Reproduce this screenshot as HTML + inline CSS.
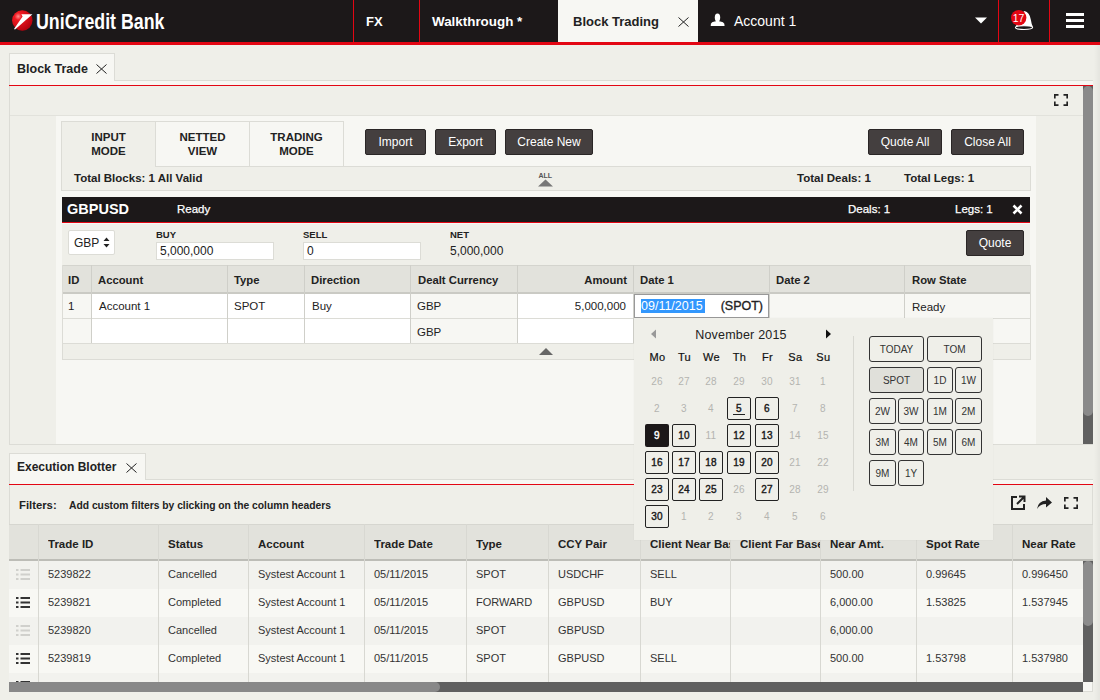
<!DOCTYPE html>
<html><head><meta charset="utf-8">
<style>
*{margin:0;padding:0;box-sizing:border-box}
html,body{width:1100px;height:700px;overflow:hidden}
body{position:relative;background:#efefe9;font-family:"Liberation Sans",sans-serif;color:#222}
.a{position:absolute}
.t{position:absolute;white-space:nowrap;line-height:1}
.b{font-weight:bold}
.vr{position:absolute;width:1px;background:#e30613}
.btn{position:absolute;height:26px;background:#443f3f;border:1px solid #2a2626;border-radius:2px;color:#fff;font-size:12px;text-align:center;line-height:24px}
.qb{position:absolute;height:26px;border:1px solid #333;border-radius:3px;font-size:10px;color:#333;text-align:center;line-height:26px}
</style></head><body>
<div class="a" style="left:0px;top:0px;width:1100px;height:42px;background:#1c1819"></div>
<div class="a" style="left:0px;top:42px;width:1100px;height:3px;background:#e30613"></div>
<svg class="a" style="left:0;top:0" width="40" height="42" viewBox="0 0 40 42">
 <defs><radialGradient id="rg" cx="0.3" cy="0.3" r="0.8"><stop offset="0" stop-color="#ff9090"/><stop offset="0.22" stop-color="#f01a22"/><stop offset="1" stop-color="#b0000c"/></radialGradient></defs>
 <circle cx="22.3" cy="20.5" r="10.2" fill="url(#rg)"/>
 <polygon points="14,29 22.6,16.6 21.3,14.2 32.5,14.2 15,29.5" fill="#fff"/>
</svg>
<div class="t b" style="left:35.5px;top:10px;font-size:22.8px;color:#fff;transform-origin:0 0;transform:scaleX(0.78)">UniCredit Bank</div>
<div class="vr" style="left:353px;top:0;height:42px"></div>
<div class="vr" style="left:419px;top:0;height:42px"></div>
<div class="vr" style="left:998px;top:0;height:42px"></div>
<div class="vr" style="left:1049px;top:0;height:42px"></div>
<div class="t b" style="left:366px;top:15px;font-size:13px;color:#fff">FX</div>
<div class="t b" style="left:432px;top:15px;font-size:13.4px;color:#fff">Walkthrough *</div>
<div class="a" style="left:558px;top:0px;width:140px;height:42px;background:#f7f7f3"></div>
<div class="t b" style="left:573px;top:15px;font-size:13px;color:#222">Block Trading</div>
<svg class="a" style="left:678px;top:17px" width="11" height="10" viewBox="0 0 11 10"><path d="M0.5 0.5L10.5 9.5M10.5 0.5L0.5 9.5" stroke="#222" stroke-width="1"/></svg>
<svg class="a" style="left:705px;top:8px" width="30" height="24" viewBox="0 0 30 24"><ellipse cx="12.5" cy="9.4" rx="2.7" ry="3.8" fill="#fff"/><rect x="10.6" y="9" width="3.8" height="5" fill="#fff"/><path d="M5.7 18 L5.9 15.8 Q6.5 14.2 9.5 13.6 L15.5 13.6 Q18.5 14.2 19.3 15.8 L19.6 18 Z" fill="#fff"/></svg>
<div class="t" style="left:734px;top:14px;font-size:14px;color:#fff">Account 1</div>
<svg class="a" style="left:975px;top:17px" width="12" height="7" viewBox="0 0 12 7"><path d="M0 0.5H12L6 6.5Z" fill="#fff"/></svg>
<svg class="a" style="left:1005px;top:5px" width="30" height="28" viewBox="0 0 30 28">
 <path d="M11 22 Q13 9 19.5 6 Q24.5 7 25.8 14.5 Q26.5 19.5 28.2 22.5 Z" fill="#fff"/>
 <ellipse cx="19" cy="22.6" rx="8.6" ry="1.9" fill="#1c1819" stroke="#fff" stroke-width="1.1"/>
 <circle cx="13.7" cy="12.7" r="7.7" fill="#e30613"/>
</svg>
<div class="t" style="left:1008px;width:21px;text-align:center;top:12.5px;font-size:10.5px;color:#fff">17</div>
<div class="a" style="left:1066px;top:13px;width:18px;height:3px;background:#fff"></div>
<div class="a" style="left:1066px;top:19px;width:18px;height:3px;background:#fff"></div>
<div class="a" style="left:1066px;top:25px;width:18px;height:3px;background:#fff"></div>
<div class="a" style="left:9px;top:53px;width:106px;height:28px;background:#f7f7f3;border:1px solid #dcdcd6;border-bottom:none"></div>
<div class="t b" style="left:17px;top:63px;font-size:12.5px;color:#222">Block Trade</div>
<svg class="a" style="left:95.5px;top:63.5px" width="11" height="10" viewBox="0 0 11 10"><path d="M0.5 0.5L10.5 9.5M10.5 0.5L0.5 9.5" stroke="#222" stroke-width="1"/></svg>
<div class="a" style="left:115px;top:80px;width:978px;height:1px;background:#dcdcd6"></div>
<div class="a" style="left:10px;top:81px;width:1083px;height:4px;background:#f7f7f3"></div>
<div class="a" style="left:9px;top:81px;width:1px;height:4px;background:#dcdcd6"></div>
<div class="a" style="left:9px;top:85px;width:1084px;height:1px;background:#e30613"></div>
<div class="a" style="left:9px;top:86px;width:1px;height:358px;background:#dcdcd6"></div>
<div class="a" style="left:9px;top:444px;width:1084px;height:1px;background:#dcdcd6"></div>
<svg class="a" style="left:1054px;top:94px" width="14" height="12" viewBox="0 0 14 12"><path d="M0.8 4.5V0.8H4.5M9.5 0.8H13.2V4.5M13.2 7.5V11.2H9.5M4.5 11.2H0.8V7.5" fill="none" stroke="#222" stroke-width="1.7"/></svg>
<div class="a" style="left:10px;top:115px;width:1073px;height:1px;background:#e2e2dc"></div>
<div class="a" style="left:56px;top:116px;width:980px;height:328px;background:#f7f7f3"></div>
<div class="a" style="left:1083px;top:86px;width:10px;height:358px;background:#606060"></div>
<div class="a" style="left:1083px;top:86px;width:10px;height:330px;background:#8a8a8a;border-radius:5px"></div>
<div class="a" style="left:61px;top:121px;width:283px;height:45px;border:1px solid #dcdcd6;border-bottom:none;background:#f7f7f3"></div>
<div class="a" style="left:61px;top:166px;width:970px;height:25px;background:#efefe9;border:1px solid #dcdcd6"></div>
<div class="a" style="left:62px;top:122px;width:93px;height:45px;background:#efefe9"></div>
<div class="a" style="left:155px;top:121px;width:1px;height:45px;background:#dcdcd6"></div>
<div class="a" style="left:249px;top:121px;width:1px;height:45px;background:#dcdcd6"></div>
<div class="t b" style="left:62px;width:93px;top:130px;font-size:11.5px;line-height:14px;text-align:center;color:#222">INPUT<br>MODE</div>
<div class="t b" style="left:156px;width:93px;top:130px;font-size:11.5px;line-height:14px;text-align:center;color:#222">NETTED<br>VIEW</div>
<div class="t b" style="left:250px;width:93px;top:130px;font-size:11.5px;line-height:14px;text-align:center;color:#222">TRADING<br>MODE</div>
<div class="btn" style="left:365px;top:129px;width:61px">Import</div>
<div class="btn" style="left:435px;top:129px;width:61px">Export</div>
<div class="btn" style="left:505px;top:129px;width:88px">Create New</div>
<div class="btn" style="left:868px;top:129px;width:74px">Quote All</div>
<div class="btn" style="left:951px;top:129px;width:73px">Close All</div>
<div class="t b" style="left:74px;top:173px;font-size:11.5px;color:#222">Total Blocks: 1 All Valid</div>
<div class="t b" style="left:538.5px;top:172px;font-size:7px;color:#555">ALL</div>
<svg class="a" style="left:538px;top:179px" width="15" height="8" viewBox="0 0 15 8"><path d="M0 7.5L7.5 0.5L15 7.5Z" fill="#777"/></svg>
<div class="t b" style="left:797px;top:173px;font-size:11.5px;color:#222">Total Deals: 1</div>
<div class="t b" style="left:904px;top:173px;font-size:11.5px;color:#222">Total Legs: 1</div>
<div class="a" style="left:62px;top:197px;width:968px;height:25px;background:#1c1819"></div>
<div class="a" style="left:62px;top:222px;width:968px;height:1px;background:#e30613"></div>
<div class="a" style="left:62px;top:223px;width:968px;height:1px;background:#f7f7f3"></div>
<div class="t b" style="left:67px;top:202px;font-size:14.5px;color:#fff">GBPUSD</div>
<div class="t" style="left:177px;top:203.5px;font-size:11.5px;color:#fff;-webkit-text-stroke:0.25px #fff">Ready</div>
<div class="t" style="left:848px;top:203.5px;font-size:11.5px;color:#fff;-webkit-text-stroke:0.25px #fff">Deals: 1</div>
<div class="t" style="left:955px;top:203.5px;font-size:11.5px;color:#fff;-webkit-text-stroke:0.25px #fff">Legs: 1</div>
<svg class="a" style="left:1012px;top:204px" width="11" height="11" viewBox="0 0 11 11"><path d="M1.5 1.5L9.5 9.5M9.5 1.5L1.5 9.5" stroke="#fff" stroke-width="2.6"/></svg>
<div class="a" style="left:62px;top:224px;width:968px;height:41px;background:#efefe9"></div>
<div class="a" style="left:68px;top:230px;width:47px;height:25px;background:#fff;border:1px solid #dcdcd6;border-radius:2px"></div>
<div class="t" style="left:74px;top:237px;font-size:12px;color:#222">GBP</div>
<svg class="a" style="left:103px;top:237px" width="7" height="11" viewBox="0 0 7 11"><path d="M0.5 4L3.5 0.5L6.5 4ZM0.5 7L3.5 10.5L6.5 7Z" fill="#222"/></svg>
<div class="t b" style="left:156px;top:230px;font-size:9.5px;color:#222">BUY</div>
<div class="a" style="left:156px;top:242px;width:118px;height:18px;background:#fff;border:1px solid #dcdcd6"></div>
<div class="t" style="left:160px;top:245px;font-size:12px;color:#222">5,000,000</div>
<div class="t b" style="left:303px;top:230px;font-size:9.5px;color:#222">SELL</div>
<div class="a" style="left:303px;top:242px;width:118px;height:18px;background:#fff;border:1px solid #dcdcd6"></div>
<div class="t" style="left:307px;top:245px;font-size:12px;color:#222">0</div>
<div class="t b" style="left:450px;top:230px;font-size:9.5px;color:#222">NET</div>
<div class="t" style="left:450px;top:245px;font-size:12px;color:#222">5,000,000</div>
<div class="btn" style="left:966px;top:230px;width:58px">Quote</div>
<div class="a" style="left:62px;top:265px;width:968px;height:29px;background:#e2e2dc;border-top:1px solid #d4d4ce;border-bottom:2px solid #cacac4"></div>
<div class="a" style="left:62px;top:294px;width:968px;height:49px;background:#f7f7f3"></div>
<div class="a" style="left:91px;top:294px;width:136px;height:49px;background:#fff"></div>
<div class="a" style="left:227px;top:294px;width:77px;height:49px;background:#fff"></div>
<div class="a" style="left:304px;top:294px;width:106px;height:49px;background:#fff"></div>
<div class="a" style="left:517px;top:294px;width:116px;height:49px;background:#fff"></div>
<div class="a" style="left:633px;top:294px;width:136px;height:49px;background:#fff"></div>
<div class="a" style="left:62px;top:318px;width:968px;height:1px;background:#dcdcd6"></div>
<div class="a" style="left:62px;top:343px;width:968px;height:17px;background:#efefe9;border-top:1px solid #dcdcd6;border-bottom:1px solid #dcdcd6"></div>
<div class="a" style="left:62px;top:265px;width:1px;height:95px;background:#dcdcd6"></div>
<div class="a" style="left:1030px;top:265px;width:1px;height:95px;background:#dcdcd6"></div>
<div class="a" style="left:91px;top:265px;width:1px;height:78px;background:#cfcfc9"></div>
<div class="a" style="left:227px;top:265px;width:1px;height:78px;background:#cfcfc9"></div>
<div class="a" style="left:304px;top:265px;width:1px;height:78px;background:#cfcfc9"></div>
<div class="a" style="left:410px;top:265px;width:1px;height:78px;background:#cfcfc9"></div>
<div class="a" style="left:517px;top:265px;width:1px;height:78px;background:#cfcfc9"></div>
<div class="a" style="left:633px;top:265px;width:1px;height:78px;background:#cfcfc9"></div>
<div class="a" style="left:769px;top:265px;width:1px;height:78px;background:#cfcfc9"></div>
<div class="a" style="left:904px;top:265px;width:1px;height:78px;background:#cfcfc9"></div>
<div class="t b" style="left:68px;top:274.5px;font-size:11.3px;">ID</div>
<div class="t b" style="left:98px;top:274.5px;font-size:11.3px;">Account</div>
<div class="t b" style="left:234px;top:274.5px;font-size:11.3px;">Type</div>
<div class="t b" style="left:311px;top:274.5px;font-size:11.3px;">Direction</div>
<div class="t b" style="left:418px;top:274.5px;font-size:11.3px;">Dealt Currency</div>
<div class="t b" style="left:640px;top:274.5px;font-size:11.3px;">Date 1</div>
<div class="t b" style="left:776px;top:274.5px;font-size:11.3px;">Date 2</div>
<div class="t b" style="left:912px;top:274.5px;font-size:11.3px;">Row State</div>
<div class="t b" style="left:517px;width:110px;text-align:right;top:274.5px;font-size:11.3px">Amount</div>
<div class="t" style="left:68px;top:301px;font-size:11.5px;">1</div>
<div class="t" style="left:99px;top:301px;font-size:11.5px;">Account 1</div>
<div class="t" style="left:234px;top:301px;font-size:11.5px;">SPOT</div>
<div class="t" style="left:312px;top:301px;font-size:11.5px;">Buy</div>
<div class="t" style="left:417px;top:301px;font-size:11.5px;">GBP</div>
<div class="t" style="left:517px;width:109px;text-align:right;top:301px;font-size:11.5px">5,000,000</div>
<div class="t" style="left:912px;top:302px;font-size:11.5px;">Ready</div>
<div class="t" style="left:417px;top:327px;font-size:11.5px;">GBP</div>
<svg class="a" style="left:539px;top:348px" width="14" height="7" viewBox="0 0 14 7"><path d="M0 7L7 0L14 7Z" fill="#666"/></svg>
<div class="a" style="left:9px;top:453px;width:137px;height:27px;background:#f7f7f3;border:1px solid #dcdcd6;border-bottom:none"></div>
<div class="t b" style="left:17px;top:461px;font-size:12px;color:#222">Execution Blotter</div>
<svg class="a" style="left:125.5px;top:463px" width="11" height="10" viewBox="0 0 11 10"><path d="M0.5 0.5L10.5 9.5M10.5 0.5L0.5 9.5" stroke="#222" stroke-width="1"/></svg>
<div class="a" style="left:146px;top:479px;width:947px;height:1px;background:#dcdcd6"></div>
<div class="a" style="left:10px;top:480px;width:1083px;height:4px;background:#f7f7f3"></div>
<div class="a" style="left:9px;top:480px;width:1px;height:4px;background:#dcdcd6"></div>
<div class="a" style="left:9px;top:484px;width:1084px;height:1px;background:#e30613"></div>
<div class="a" style="left:9px;top:485px;width:1px;height:207px;background:#dcdcd6"></div>
<div class="a" style="left:1092px;top:485px;width:1px;height:207px;background:#dcdcd6"></div>
<div class="t b" style="left:19px;top:499.5px;font-size:11.3px;color:#222">Filters:</div>
<div class="t b" style="left:69px;top:500.5px;font-size:10.3px;color:#222">Add custom filters by clicking on the column headers</div>
<svg class="a" style="left:1010px;top:495px" width="16" height="16" viewBox="0 0 16 16"><path d="M7 2H2V14H14V9" fill="none" stroke="#222" stroke-width="2"/><path d="M9 1.5H14.5V7M14 2L7 9" fill="none" stroke="#222" stroke-width="2"/></svg>
<svg class="a" style="left:1036px;top:495px" width="17" height="15" viewBox="0 0 17 15"><path d="M1 14 Q2 6 10 5.5V2L16 7.5L10 12.5V9 Q4 9 1 14Z" fill="#222"/></svg>
<svg class="a" style="left:1064px;top:497px" width="14" height="12" viewBox="0 0 14 12"><path d="M0.8 4.5V0.8H4.5M9.5 0.8H13.2V4.5M13.2 7.5V11.2H9.5M4.5 11.2H0.8V7.5" fill="none" stroke="#222" stroke-width="1.8"/></svg>
<div class="a" style="left:9px;top:524px;width:1084px;height:37px;background:#e2e2dc;border-top:1px solid #d6d6d0;border-bottom:2px solid #bdbdb7"></div>
<div class="a" style="left:9px;top:561px;width:1074px;height:28px;background:#f2f2ee"></div>
<div class="a" style="left:9px;top:589px;width:1074px;height:28px;background:#f8f8f4"></div>
<div class="a" style="left:9px;top:617px;width:1074px;height:28px;background:#f2f2ee"></div>
<div class="a" style="left:9px;top:645px;width:1074px;height:28px;background:#f8f8f4"></div>
<div class="a" style="left:9px;top:673px;width:1074px;height:9px;background:#f2f2ee"></div>
<div class="a" style="left:38px;top:524px;width:1px;height:158px;background:#d8d8d2"></div>
<div class="a" style="left:158px;top:524px;width:1px;height:158px;background:#d8d8d2"></div>
<div class="a" style="left:248px;top:524px;width:1px;height:158px;background:#d8d8d2"></div>
<div class="a" style="left:364px;top:524px;width:1px;height:158px;background:#d8d8d2"></div>
<div class="a" style="left:466px;top:524px;width:1px;height:158px;background:#d8d8d2"></div>
<div class="a" style="left:548px;top:524px;width:1px;height:158px;background:#d8d8d2"></div>
<div class="a" style="left:640px;top:524px;width:1px;height:158px;background:#d8d8d2"></div>
<div class="a" style="left:730px;top:524px;width:1px;height:158px;background:#d8d8d2"></div>
<div class="a" style="left:820px;top:524px;width:1px;height:158px;background:#d8d8d2"></div>
<div class="a" style="left:916px;top:524px;width:1px;height:158px;background:#d8d8d2"></div>
<div class="a" style="left:1012px;top:524px;width:1px;height:158px;background:#d8d8d2"></div>
<div class="t b" style="left:48px;top:539px;width:110px;overflow:hidden;font-size:11.5px;color:#222">Trade ID</div>
<div class="t b" style="left:168px;top:539px;width:80px;overflow:hidden;font-size:11.5px;color:#222">Status</div>
<div class="t b" style="left:258px;top:539px;width:106px;overflow:hidden;font-size:11.5px;color:#222">Account</div>
<div class="t b" style="left:374px;top:539px;width:92px;overflow:hidden;font-size:11.5px;color:#222">Trade Date</div>
<div class="t b" style="left:476px;top:539px;width:72px;overflow:hidden;font-size:11.5px;color:#222">Type</div>
<div class="t b" style="left:558px;top:539px;width:82px;overflow:hidden;font-size:11.5px;color:#222">CCY Pair</div>
<div class="t b" style="left:650px;top:539px;width:80px;overflow:hidden;font-size:11.5px;color:#222">Client Near Base</div>
<div class="t b" style="left:740px;top:539px;width:80px;overflow:hidden;font-size:11.5px;color:#222">Client Far Base</div>
<div class="t b" style="left:830px;top:539px;width:86px;overflow:hidden;font-size:11.5px;color:#222">Near Amt.</div>
<div class="t b" style="left:926px;top:539px;width:86px;overflow:hidden;font-size:11.5px;color:#222">Spot Rate</div>
<div class="t b" style="left:1022px;top:539px;width:71px;overflow:hidden;font-size:11.5px;color:#222">Near Rate</div>
<div class="t" style="left:48px;top:569px;font-size:11px;color:#333">5239822</div>
<div class="t" style="left:168px;top:569px;font-size:11px;color:#333">Cancelled</div>
<div class="t" style="left:258px;top:569px;font-size:11px;color:#333">Systest Account 1</div>
<div class="t" style="left:374px;top:569px;font-size:11px;color:#333">05/11/2015</div>
<div class="t" style="left:476px;top:569px;font-size:11px;color:#333">SPOT</div>
<div class="t" style="left:558px;top:569px;font-size:11px;color:#333">USDCHF</div>
<div class="t" style="left:650px;top:569px;font-size:11px;color:#333">SELL</div>
<div class="t" style="left:830px;top:569px;font-size:11px;color:#333">500.00</div>
<div class="t" style="left:926px;top:569px;font-size:11px;color:#333">0.99645</div>
<div class="t" style="left:1022px;top:569px;font-size:11px;color:#333">0.996450</div>
<svg class="a" style="left:16px;top:569px" width="14" height="11" viewBox="0 0 14 11"><path d="M0 1H2.5M0 5.5H2.5M0 10H2.5M4.5 1H14M4.5 5.5H14M4.5 10H14" stroke="#d0d0cc" stroke-width="2"/></svg>
<div class="t" style="left:48px;top:597px;font-size:11px;color:#333">5239821</div>
<div class="t" style="left:168px;top:597px;font-size:11px;color:#333">Completed</div>
<div class="t" style="left:258px;top:597px;font-size:11px;color:#333">Systest Account 1</div>
<div class="t" style="left:374px;top:597px;font-size:11px;color:#333">05/11/2015</div>
<div class="t" style="left:476px;top:597px;font-size:11px;color:#333">FORWARD</div>
<div class="t" style="left:558px;top:597px;font-size:11px;color:#333">GBPUSD</div>
<div class="t" style="left:650px;top:597px;font-size:11px;color:#333">BUY</div>
<div class="t" style="left:830px;top:597px;font-size:11px;color:#333">6,000.00</div>
<div class="t" style="left:926px;top:597px;font-size:11px;color:#333">1.53825</div>
<div class="t" style="left:1022px;top:597px;font-size:11px;color:#333">1.537945</div>
<svg class="a" style="left:16px;top:597px" width="14" height="11" viewBox="0 0 14 11"><path d="M0 1H2.5M0 5.5H2.5M0 10H2.5M4.5 1H14M4.5 5.5H14M4.5 10H14" stroke="#333" stroke-width="2"/></svg>
<div class="t" style="left:48px;top:625px;font-size:11px;color:#333">5239820</div>
<div class="t" style="left:168px;top:625px;font-size:11px;color:#333">Cancelled</div>
<div class="t" style="left:258px;top:625px;font-size:11px;color:#333">Systest Account 1</div>
<div class="t" style="left:374px;top:625px;font-size:11px;color:#333">05/11/2015</div>
<div class="t" style="left:476px;top:625px;font-size:11px;color:#333">SPOT</div>
<div class="t" style="left:558px;top:625px;font-size:11px;color:#333">GBPUSD</div>
<div class="t" style="left:830px;top:625px;font-size:11px;color:#333">6,000.00</div>
<svg class="a" style="left:16px;top:625px" width="14" height="11" viewBox="0 0 14 11"><path d="M0 1H2.5M0 5.5H2.5M0 10H2.5M4.5 1H14M4.5 5.5H14M4.5 10H14" stroke="#d0d0cc" stroke-width="2"/></svg>
<div class="t" style="left:48px;top:653px;font-size:11px;color:#333">5239819</div>
<div class="t" style="left:168px;top:653px;font-size:11px;color:#333">Completed</div>
<div class="t" style="left:258px;top:653px;font-size:11px;color:#333">Systest Account 1</div>
<div class="t" style="left:374px;top:653px;font-size:11px;color:#333">05/11/2015</div>
<div class="t" style="left:476px;top:653px;font-size:11px;color:#333">SPOT</div>
<div class="t" style="left:558px;top:653px;font-size:11px;color:#333">GBPUSD</div>
<div class="t" style="left:650px;top:653px;font-size:11px;color:#333">SELL</div>
<div class="t" style="left:830px;top:653px;font-size:11px;color:#333">500.00</div>
<div class="t" style="left:926px;top:653px;font-size:11px;color:#333">1.53798</div>
<div class="t" style="left:1022px;top:653px;font-size:11px;color:#333">1.537980</div>
<svg class="a" style="left:16px;top:653px" width="14" height="11" viewBox="0 0 14 11"><path d="M0 1H2.5M0 5.5H2.5M0 10H2.5M4.5 1H14M4.5 5.5H14M4.5 10H14" stroke="#333" stroke-width="2"/></svg>
<svg class="a" style="left:16px;top:681px" width="14" height="2" viewBox="0 0 14 2"><path d="M0 1H2.5M4.5 1H14" stroke="#333" stroke-width="2"/></svg>
<div class="a" style="left:1083px;top:561px;width:10px;height:121px;background:#606060"></div>
<div class="a" style="left:1083px;top:561px;width:10px;height:65px;background:#8c8c8c;border-radius:5px"></div>
<div class="a" style="left:9px;top:682px;width:1074px;height:10px;background:#606060"></div>
<div class="a" style="left:9px;top:682px;width:431px;height:10px;background:#888;border-radius:0 5px 5px 0"></div>
<div class="a" style="left:1083px;top:682px;width:10px;height:10px;background:#f7f7f3;border:1px solid #dcdcd6;border-top:none;border-left:none"></div>
<div class="a" style="left:634px;top:294px;width:135px;height:24px;background:#fff;border:1px solid #999"></div>
<div class="a" style="left:641px;top:299px;width:64px;height:14px;background:#3297fd"></div>
<div class="t" style="left:641px;top:300px;font-size:12.5px;color:#fff">09/11/2015</div>
<div class="t" style="left:700px;width:63px;text-align:right;top:300px;font-size:12.5px;color:#222;-webkit-text-stroke:0.35px #222">(SPOT)</div>
<div class="a" style="left:634px;top:318px;width:359px;height:222px;background:#efefe9;box-shadow:0 0 1px rgba(0,0,0,0.08)"></div>
<div class="t" style="left:641px;width:200px;text-align:center;top:329px;font-size:12.5px;color:#222;letter-spacing:0.2px">November 2015</div>
<svg class="a" style="left:650px;top:329px" width="7" height="10" viewBox="0 0 7 10"><path d="M6 0.5V9.5L1 5Z" fill="#999"/></svg>
<svg class="a" style="left:825px;top:329px" width="7" height="10" viewBox="0 0 7 10"><path d="M1 0.5V9.5L6 5Z" fill="#111"/></svg>
<div class="t" style="left:642.5px;width:30px;text-align:center;top:352px;font-size:11px;color:#111;-webkit-text-stroke:0.2px #111;letter-spacing:0.4px">Mo</div>
<div class="t" style="left:669.5px;width:30px;text-align:center;top:352px;font-size:11px;color:#111;-webkit-text-stroke:0.2px #111;letter-spacing:0.4px">Tu</div>
<div class="t" style="left:696.5px;width:30px;text-align:center;top:352px;font-size:11px;color:#111;-webkit-text-stroke:0.2px #111;letter-spacing:0.4px">We</div>
<div class="t" style="left:724.5px;width:30px;text-align:center;top:352px;font-size:11px;color:#111;-webkit-text-stroke:0.2px #111;letter-spacing:0.4px">Th</div>
<div class="t" style="left:752.5px;width:30px;text-align:center;top:352px;font-size:11px;color:#111;-webkit-text-stroke:0.2px #111;letter-spacing:0.4px">Fr</div>
<div class="t" style="left:780.5px;width:30px;text-align:center;top:352px;font-size:11px;color:#111;-webkit-text-stroke:0.2px #111;letter-spacing:0.4px">Sa</div>
<div class="t" style="left:808.5px;width:30px;text-align:center;top:352px;font-size:11px;color:#111;-webkit-text-stroke:0.2px #111;letter-spacing:0.4px">Su</div>
<div class="t" style="left:645px;width:24px;text-align:center;top:377px;font-size:10px;color:#b4b4b0;letter-spacing:0.3px">26</div>
<div class="t" style="left:672px;width:24px;text-align:center;top:377px;font-size:10px;color:#b4b4b0;letter-spacing:0.3px">27</div>
<div class="t" style="left:699px;width:24px;text-align:center;top:377px;font-size:10px;color:#b4b4b0;letter-spacing:0.3px">28</div>
<div class="t" style="left:727px;width:24px;text-align:center;top:377px;font-size:10px;color:#b4b4b0;letter-spacing:0.3px">29</div>
<div class="t" style="left:755px;width:24px;text-align:center;top:377px;font-size:10px;color:#b4b4b0;letter-spacing:0.3px">30</div>
<div class="t" style="left:783px;width:24px;text-align:center;top:377px;font-size:10px;color:#b4b4b0;letter-spacing:0.3px">31</div>
<div class="t" style="left:811px;width:24px;text-align:center;top:377px;font-size:10px;color:#b4b4b0;letter-spacing:0.3px">1</div>
<div class="t" style="left:645px;width:24px;text-align:center;top:404px;font-size:10px;color:#b4b4b0;letter-spacing:0.3px">2</div>
<div class="t" style="left:672px;width:24px;text-align:center;top:404px;font-size:10px;color:#b4b4b0;letter-spacing:0.3px">3</div>
<div class="t" style="left:699px;width:24px;text-align:center;top:404px;font-size:10px;color:#b4b4b0;letter-spacing:0.3px">4</div>
<div class="a" style="left:727px;top:397px;width:24px;height:23px;border:1px solid #222;border-radius:2px"></div>
<div class="t" style="left:727px;width:24px;text-align:center;top:404px;font-size:10px;color:#1a1a1a;-webkit-text-stroke:0.4px #1a1a1a;letter-spacing:0.3px;">5</div>
<div class="a" style="left:755px;top:397px;width:24px;height:23px;border:1px solid #222;border-radius:2px"></div>
<div class="t" style="left:755px;width:24px;text-align:center;top:404px;font-size:10px;color:#1a1a1a;-webkit-text-stroke:0.4px #1a1a1a;letter-spacing:0.3px;">6</div>
<div class="t" style="left:783px;width:24px;text-align:center;top:404px;font-size:10px;color:#b4b4b0;letter-spacing:0.3px">7</div>
<div class="t" style="left:811px;width:24px;text-align:center;top:404px;font-size:10px;color:#b4b4b0;letter-spacing:0.3px">8</div>
<div class="a" style="left:645px;top:424px;width:24px;height:23px;background:#1c1819;border-radius:2px"></div>
<div class="t" style="left:645px;width:24px;text-align:center;top:431px;font-size:10px;color:#fff;-webkit-text-stroke:0.4px #fff;letter-spacing:0.3px">9</div>
<div class="a" style="left:672px;top:424px;width:24px;height:23px;border:1px solid #222;border-radius:2px"></div>
<div class="t" style="left:672px;width:24px;text-align:center;top:431px;font-size:10px;color:#1a1a1a;-webkit-text-stroke:0.4px #1a1a1a;letter-spacing:0.3px;">10</div>
<div class="t" style="left:699px;width:24px;text-align:center;top:431px;font-size:10px;color:#b4b4b0;letter-spacing:0.3px">11</div>
<div class="a" style="left:727px;top:424px;width:24px;height:23px;border:1px solid #222;border-radius:2px"></div>
<div class="t" style="left:727px;width:24px;text-align:center;top:431px;font-size:10px;color:#1a1a1a;-webkit-text-stroke:0.4px #1a1a1a;letter-spacing:0.3px;">12</div>
<div class="a" style="left:755px;top:424px;width:24px;height:23px;border:1px solid #222;border-radius:2px"></div>
<div class="t" style="left:755px;width:24px;text-align:center;top:431px;font-size:10px;color:#1a1a1a;-webkit-text-stroke:0.4px #1a1a1a;letter-spacing:0.3px;">13</div>
<div class="t" style="left:783px;width:24px;text-align:center;top:431px;font-size:10px;color:#b4b4b0;letter-spacing:0.3px">14</div>
<div class="t" style="left:811px;width:24px;text-align:center;top:431px;font-size:10px;color:#b4b4b0;letter-spacing:0.3px">15</div>
<div class="a" style="left:645px;top:451px;width:24px;height:23px;border:1px solid #222;border-radius:2px"></div>
<div class="t" style="left:645px;width:24px;text-align:center;top:458px;font-size:10px;color:#1a1a1a;-webkit-text-stroke:0.4px #1a1a1a;letter-spacing:0.3px;">16</div>
<div class="a" style="left:672px;top:451px;width:24px;height:23px;border:1px solid #222;border-radius:2px"></div>
<div class="t" style="left:672px;width:24px;text-align:center;top:458px;font-size:10px;color:#1a1a1a;-webkit-text-stroke:0.4px #1a1a1a;letter-spacing:0.3px;">17</div>
<div class="a" style="left:699px;top:451px;width:24px;height:23px;border:1px solid #222;border-radius:2px"></div>
<div class="t" style="left:699px;width:24px;text-align:center;top:458px;font-size:10px;color:#1a1a1a;-webkit-text-stroke:0.4px #1a1a1a;letter-spacing:0.3px;">18</div>
<div class="a" style="left:727px;top:451px;width:24px;height:23px;border:1px solid #222;border-radius:2px"></div>
<div class="t" style="left:727px;width:24px;text-align:center;top:458px;font-size:10px;color:#1a1a1a;-webkit-text-stroke:0.4px #1a1a1a;letter-spacing:0.3px;">19</div>
<div class="a" style="left:755px;top:451px;width:24px;height:23px;border:1px solid #222;border-radius:2px"></div>
<div class="t" style="left:755px;width:24px;text-align:center;top:458px;font-size:10px;color:#1a1a1a;-webkit-text-stroke:0.4px #1a1a1a;letter-spacing:0.3px;">20</div>
<div class="t" style="left:783px;width:24px;text-align:center;top:458px;font-size:10px;color:#b4b4b0;letter-spacing:0.3px">21</div>
<div class="t" style="left:811px;width:24px;text-align:center;top:458px;font-size:10px;color:#b4b4b0;letter-spacing:0.3px">22</div>
<div class="a" style="left:645px;top:478px;width:24px;height:23px;border:1px solid #222;border-radius:2px"></div>
<div class="t" style="left:645px;width:24px;text-align:center;top:485px;font-size:10px;color:#1a1a1a;-webkit-text-stroke:0.4px #1a1a1a;letter-spacing:0.3px;">23</div>
<div class="a" style="left:672px;top:478px;width:24px;height:23px;border:1px solid #222;border-radius:2px"></div>
<div class="t" style="left:672px;width:24px;text-align:center;top:485px;font-size:10px;color:#1a1a1a;-webkit-text-stroke:0.4px #1a1a1a;letter-spacing:0.3px;">24</div>
<div class="a" style="left:699px;top:478px;width:24px;height:23px;border:1px solid #222;border-radius:2px"></div>
<div class="t" style="left:699px;width:24px;text-align:center;top:485px;font-size:10px;color:#1a1a1a;-webkit-text-stroke:0.4px #1a1a1a;letter-spacing:0.3px;">25</div>
<div class="t" style="left:727px;width:24px;text-align:center;top:485px;font-size:10px;color:#b4b4b0;letter-spacing:0.3px">26</div>
<div class="a" style="left:755px;top:478px;width:24px;height:23px;border:1px solid #222;border-radius:2px"></div>
<div class="t" style="left:755px;width:24px;text-align:center;top:485px;font-size:10px;color:#1a1a1a;-webkit-text-stroke:0.4px #1a1a1a;letter-spacing:0.3px;">27</div>
<div class="t" style="left:783px;width:24px;text-align:center;top:485px;font-size:10px;color:#b4b4b0;letter-spacing:0.3px">28</div>
<div class="t" style="left:811px;width:24px;text-align:center;top:485px;font-size:10px;color:#b4b4b0;letter-spacing:0.3px">29</div>
<div class="a" style="left:645px;top:505px;width:24px;height:23px;border:1px solid #222;border-radius:2px"></div>
<div class="t" style="left:645px;width:24px;text-align:center;top:512px;font-size:10px;color:#1a1a1a;-webkit-text-stroke:0.4px #1a1a1a;letter-spacing:0.3px;">30</div>
<div class="t" style="left:672px;width:24px;text-align:center;top:512px;font-size:10px;color:#b4b4b0;letter-spacing:0.3px">1</div>
<div class="t" style="left:699px;width:24px;text-align:center;top:512px;font-size:10px;color:#b4b4b0;letter-spacing:0.3px">2</div>
<div class="t" style="left:727px;width:24px;text-align:center;top:512px;font-size:10px;color:#b4b4b0;letter-spacing:0.3px">3</div>
<div class="t" style="left:755px;width:24px;text-align:center;top:512px;font-size:10px;color:#b4b4b0;letter-spacing:0.3px">4</div>
<div class="t" style="left:783px;width:24px;text-align:center;top:512px;font-size:10px;color:#b4b4b0;letter-spacing:0.3px">5</div>
<div class="t" style="left:811px;width:24px;text-align:center;top:512px;font-size:10px;color:#b4b4b0;letter-spacing:0.3px">6</div>
<div class="a" style="left:733px;top:414px;width:12px;height:1px;background:#222"></div>
<div class="a" style="left:853px;top:336px;width:1px;height:155px;background:#d8d8d2"></div>
<div class="qb" style="left:869px;top:336px;width:55px;background:transparent">TODAY</div>
<div class="qb" style="left:927px;top:336px;width:55px;background:transparent">TOM</div>
<div class="qb" style="left:869px;top:367px;width:55px;background:#e0e0da">SPOT</div>
<div class="qb" style="left:927px;top:367px;width:26px;background:transparent">1D</div>
<div class="qb" style="left:955px;top:367px;width:27px;background:transparent">1W</div>
<div class="qb" style="left:869px;top:398px;width:27px;background:transparent">2W</div>
<div class="qb" style="left:898px;top:398px;width:26px;background:transparent">3W</div>
<div class="qb" style="left:927px;top:398px;width:26px;background:transparent">1M</div>
<div class="qb" style="left:955px;top:398px;width:27px;background:transparent">2M</div>
<div class="qb" style="left:869px;top:429px;width:27px;background:transparent">3M</div>
<div class="qb" style="left:898px;top:429px;width:26px;background:transparent">4M</div>
<div class="qb" style="left:927px;top:429px;width:26px;background:transparent">5M</div>
<div class="qb" style="left:955px;top:429px;width:27px;background:transparent">6M</div>
<div class="qb" style="left:869px;top:460px;width:27px;background:transparent">9M</div>
<div class="qb" style="left:898px;top:460px;width:26px;background:transparent">1Y</div>
<div class="a" style="left:1094px;top:45px;width:6px;height:655px;background:linear-gradient(to right,rgba(0,0,0,0),rgba(0,0,0,0.045))"></div>
</body></html>
